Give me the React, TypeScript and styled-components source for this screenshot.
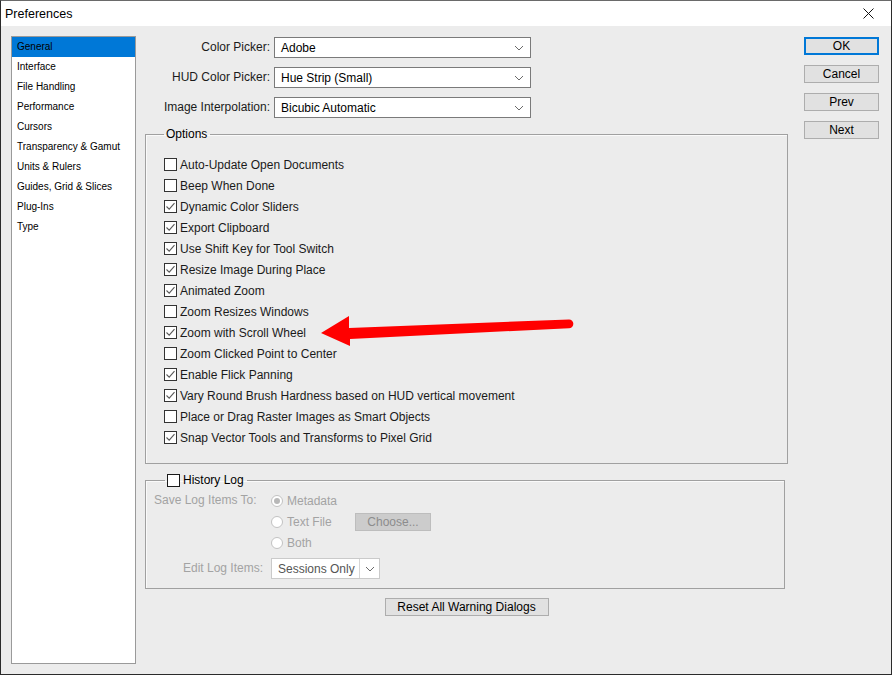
import React from 'react'
import styled, { createGlobalStyle } from 'styled-components'

const GlobalStyle = createGlobalStyle`
  html, body {
    margin: 0;
    padding: 0;
    background: #ececec;
  }
  body {
    font-family: 'Liberation Sans', Arial, sans-serif;
    font-size: 12px;
    color: #1a1a1a;
  }
`

const Window = styled.div`
  position: relative;
  width: 892px;
  height: 675px;
  box-sizing: border-box;
  border: 1px solid #2b2b2b;
  border-top-color: #6a6a6a;
  background: #ececec;
  display: flex;
  flex-direction: column;
  overflow: hidden;
`

const TitleBar = styled.div`
  height: 25px;
  background: #ffffff;
  display: flex;
  align-items: center;
  justify-content: space-between;
  padding: 0 17px 0 4px;
  font-size: 12.5px;
  color: #000;
`

const Body = styled.div`
  flex: 1;
  display: flex;
  padding: 10px 11px 10px 10px;
`

const CategoryList = styled.ul`
  list-style: none;
  margin: 0;
  padding: 0;
  width: 125px;
  box-sizing: border-box;
  background: #fff;
  border: 1px solid #9a9a9a;
  font-size: 10px;
`

const CategoryItem = styled.li<{ $active?: boolean }>`
  height: 20px;
  line-height: 20px;
  padding-left: 5px;
  background: ${(p) => (p.$active ? '#0078d7' : 'transparent')};
  color: #000;
`

const Middle = styled.div`
  width: 643px;
  margin-left: 9px;
  padding-top: 1px;
  display: flex;
  flex-direction: column;
`

const SelectGrid = styled.div`
  display: grid;
  grid-template-columns: 125px 257px;
  column-gap: 4px;
  row-gap: 9px;
  align-items: center;
`

const FieldLabel = styled.label<{ $disabled?: boolean; $left?: boolean }>`
  text-align: ${(p) => (p.$left ? 'left' : 'right')};
  line-height: 21px;
  white-space: nowrap;
  color: ${(p) => (p.$disabled ? '#a3a3a3' : '#1a1a1a')};
`

const SelectBox = styled.div<{ $width?: number; $disabled?: boolean }>`
  height: 21px;
  width: ${(p) => (p.$width ? `${p.$width}px` : 'auto')};
  box-sizing: border-box;
  background: #fff;
  border: 1px solid ${(p) => (p.$disabled ? '#cacaca' : '#7a7a7a')};
  display: flex;
  align-items: center;
  justify-content: space-between;
  padding-left: 6px;
  color: ${(p) => (p.$disabled ? '#555' : '#000')};
`

const ChevronCell = styled.span<{ $split?: boolean }>`
  height: 100%;
  width: ${(p) => (p.$split ? '19px' : '22px')};
  border-left: ${(p) => (p.$split ? '1px solid #d6d6d6' : 'none')};
  display: flex;
  align-items: center;
  justify-content: center;
`

const Group = styled.fieldset<{ $width: number; $padLeft: number }>`
  margin: 9px 0 0 0;
  width: ${(p) => p.$width}px;
  box-sizing: border-box;
  border: 1px solid #a0a0a0;
  box-shadow: inset 1px 1px 0 #fafafa;
  padding: 0 0 0 ${(p) => p.$padLeft}px;
  min-inline-size: 0;
`

const GroupLegend = styled.legend<{ $offset: number }>`
  padding: 0 3px 0 2px;
  margin-left: ${(p) => p.$offset}px;
  line-height: 14px;
  height: 14px;
  display: flex;
  align-items: center;
  gap: 3px;
  color: #000;
  font-size: 12px;
`

const OptionsList = styled.div`
  padding: 13px 0 15px 0;
  display: flex;
  flex-direction: column;
`

const CheckRow = styled.div`
  height: 21px;
  display: flex;
  align-items: center;
  gap: 3px;
  white-space: nowrap;
`

const Box = styled.span<{ $dark?: boolean }>`
  width: 13px;
  height: 13px;
  box-sizing: border-box;
  border: 1px solid ${(p) => (p.$dark ? '#1a1a1a' : '#333')};
  background: #fff;
  display: inline-flex;
  align-items: center;
  justify-content: center;
  flex: none;
`

const HistoryBody = styled.div`
  padding: 3px 0 9px 0;
  display: grid;
  grid-template-columns: 109px auto;
  column-gap: 8px;
`

const RadioStack = styled.div`
  display: flex;
  flex-direction: column;
`

const RadioRow = styled.div`
  height: 21px;
  display: flex;
  align-items: center;
`

const RadioLabel = styled.span<{ $width?: number }>`
  display: flex;
  align-items: center;
  gap: 4px;
  color: #a3a3a3;
  width: ${(p) => (p.$width ? `${p.$width}px` : 'auto')};
`

const Radio = styled.span<{ $on?: boolean }>`
  width: 12px;
  height: 12px;
  box-sizing: border-box;
  border-radius: 50%;
  border: 1px solid #c2c2c2;
  background: #fff;
  display: inline-flex;
  align-items: center;
  justify-content: center;
  &::after {
    content: '';
    width: 6px;
    height: 6px;
    border-radius: 50%;
    background: ${(p) => (p.$on ? '#b8b8b8' : 'transparent')};
  }
`

const GhostButton = styled.span`
  width: 76px;
  height: 18px;
  box-sizing: border-box;
  background: #cccccc;
  border: 1px solid #bdbdbd;
  color: #8c8c8c;
  display: flex;
  align-items: center;
  justify-content: center;
`

const EditRow = styled.div`
  grid-column: 1 / span 2;
  display: grid;
  grid-template-columns: 109px auto;
  column-gap: 8px;
  align-items: center;
  margin-top: 5px;
`

const ResetRow = styled.div`
  display: flex;
  justify-content: center;
  margin-top: 9px;
`

const PushButton = styled.button<{ $default?: boolean; $width: number }>`
  width: ${(p) => p.$width}px;
  height: 18px;
  box-sizing: border-box;
  padding: 0;
  font: inherit;
  color: #000;
  background: #e1e1e1;
  border: ${(p) => (p.$default ? '2px solid #0078d7' : '1px solid #adadad')};
  display: flex;
  align-items: center;
  justify-content: center;
`

const RightColumn = styled.div`
  margin-left: 16px;
  padding-top: 1px;
  display: flex;
  flex-direction: column;
  gap: 10px;
`

const Overlay = styled.svg`
  position: absolute;
  left: 0;
  top: 0;
  pointer-events: none;
`

const Chevron = () => (
  <svg width="10" height="6" viewBox="0 0 10 6">
    <polyline points="1,1 5,5 9,1" fill="none" stroke="#6a6a6a" strokeWidth="1" />
  </svg>
)

const Check = () => (
  <svg width="11" height="11" viewBox="0 0 11 11">
    <polyline points="1.5,5.5 4.2,8.2 9.5,2.2" fill="none" stroke="#5a5a5a" strokeWidth="1.1" />
  </svg>
)

const categories = [
  'General',
  'Interface',
  'File Handling',
  'Performance',
  'Cursors',
  'Transparency & Gamut',
  'Units & Rulers',
  'Guides, Grid & Slices',
  'Plug-Ins',
  'Type',
]

const pickers = [
  { label: 'Color Picker:', value: 'Adobe' },
  { label: 'HUD Color Picker:', value: 'Hue Strip (Small)' },
  { label: 'Image Interpolation:', value: 'Bicubic Automatic' },
]

const options: [string, boolean][] = [
  ['Auto-Update Open Documents', false],
  ['Beep When Done', false],
  ['Dynamic Color Sliders', true],
  ['Export Clipboard', true],
  ['Use Shift Key for Tool Switch', true],
  ['Resize Image During Place', true],
  ['Animated Zoom', true],
  ['Zoom Resizes Windows', false],
  ['Zoom with Scroll Wheel', true],
  ['Zoom Clicked Point to Center', false],
  ['Enable Flick Panning', true],
  ['Vary Round Brush Hardness based on HUD vertical movement', true],
  ['Place or Drag Raster Images as Smart Objects', false],
  ['Snap Vector Tools and Transforms to Pixel Grid', true],
]

export default function App() {
  return (
    <>
      <GlobalStyle />
      <Window>
        <TitleBar>
          <span>Preferences</span>
          <svg width="11" height="11" viewBox="0 0 11 11">
            <path d="M0.5 0.5 L10.5 10.5 M10.5 0.5 L0.5 10.5" stroke="#111" strokeWidth="1" />
          </svg>
        </TitleBar>
        <Body>
          <CategoryList>
            {categories.map((c, i) => (
              <CategoryItem key={c} $active={i === 0}>
                {c}
              </CategoryItem>
            ))}
          </CategoryList>

          <Middle>
            <SelectGrid>
              {pickers.map((p) => (
                <React.Fragment key={p.label}>
                  <FieldLabel>{p.label}</FieldLabel>
                  <SelectBox>
                    <span>{p.value}</span>
                    <ChevronCell>
                      <Chevron />
                    </ChevronCell>
                  </SelectBox>
                </React.Fragment>
              ))}
            </SelectGrid>

            <Group $width={643} $padLeft={18}>
              <GroupLegend $offset={0}>Options</GroupLegend>
              <OptionsList>
                {options.map(([label, on]) => (
                  <CheckRow key={label}>
                    <Box>{on && <Check />}</Box>
                    <span>{label}</span>
                  </CheckRow>
                ))}
              </OptionsList>
            </Group>

            <Group $width={640} $padLeft={8}>
              <GroupLegend $offset={11}>
                <Box $dark />
                <span>History Log</span>
              </GroupLegend>
              <HistoryBody>
                <FieldLabel $disabled $left>
                  Save Log Items To:
                </FieldLabel>
                <RadioStack>
                  <RadioRow>
                    <RadioLabel>
                      <Radio $on />
                      Metadata
                    </RadioLabel>
                  </RadioRow>
                  <RadioRow>
                    <RadioLabel $width={84}>
                      <Radio />
                      Text File
                    </RadioLabel>
                    <GhostButton>Choose...</GhostButton>
                  </RadioRow>
                  <RadioRow>
                    <RadioLabel>
                      <Radio />
                      Both
                    </RadioLabel>
                  </RadioRow>
                </RadioStack>
                <EditRow>
                  <FieldLabel $disabled>Edit Log Items:</FieldLabel>
                  <SelectBox $width={109} $disabled>
                    <span>Sessions Only</span>
                    <ChevronCell $split>
                      <Chevron />
                    </ChevronCell>
                  </SelectBox>
                </EditRow>
              </HistoryBody>
            </Group>

            <ResetRow>
              <PushButton $width={164}>Reset All Warning Dialogs</PushButton>
            </ResetRow>
          </Middle>

          <RightColumn>
            <PushButton $default $width={75}>OK</PushButton>
            <PushButton $width={75}>Cancel</PushButton>
            <PushButton $width={75}>Prev</PushButton>
            <PushButton $width={75}>Next</PushButton>
          </RightColumn>
        </Body>

        <Overlay width="892" height="675" viewBox="0 0 892 675">
          <path
            d="M320 332 L348 315 L348 327 L568 318.5 A4.3 4.3 0 0 1 568 327.2 L349 338 L349 345 Z"
            fill="#ff0000"
          />
        </Overlay>
      </Window>
    </>
  )
}
